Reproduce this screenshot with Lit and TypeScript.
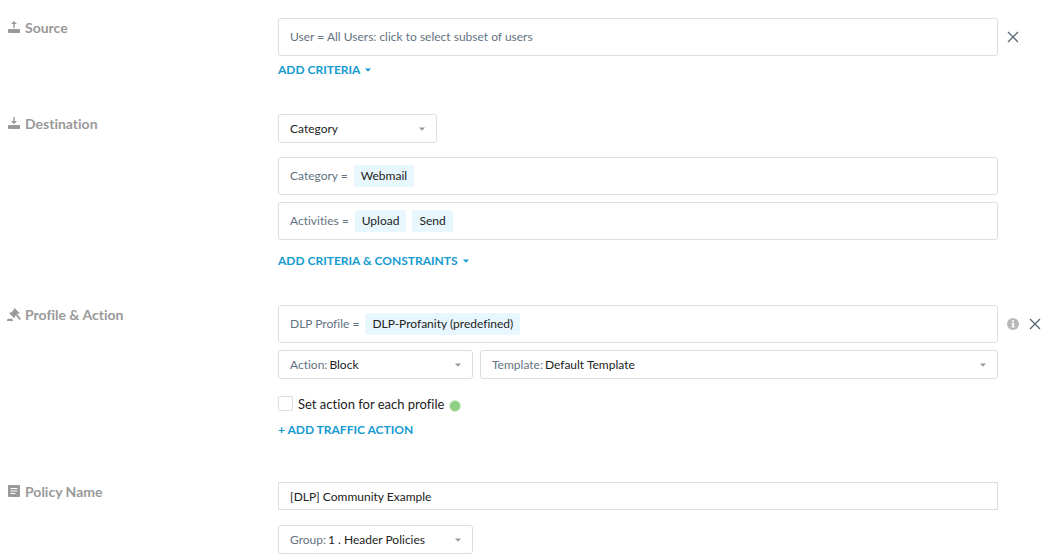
import { LitElement, html, css, svg, nothing } from "lit";
import { customElement, property } from "lit/decorators.js";

const caret = html`<svg class="caret" width="6" height="4" viewBox="0 0 6 4" aria-hidden="true"><path d="M0 0.4h6L3 3.8z" fill="currentColor"/></svg>`;

const close = html`<svg width="12" height="12" viewBox="0 0 12 12" aria-hidden="true"><path d="M1 1l10 10M11 1L1 11" stroke="currentColor" stroke-width="1.3" fill="none"/></svg>`;

const icons: Record<string, unknown> = {
  source: svg`<path d="M2 8h10a1 1 0 0 1 1 1v2a1 1 0 0 1-1 1H2a1 1 0 0 1-1-1V9a1 1 0 0 1 1-1z"/><path d="M6.300 7V3H4L7 0l3 3H7.700v4z"/>`,
  destination: svg`<path d="M2 8h10a1 1 0 0 1 1 1v2a1 1 0 0 1-1 1H2a1 1 0 0 1-1-1V9a1 1 0 0 1 1-1z"/><path d="M6.300 0v4H4l3 3.200L10 4H7.700V0z"/>`,
  action: svg`<path d="M7.500 0l5 5-1 1-0.700-0.400-3 3 0.400 0.700-1 1-5-5 1-1 0.700 0.400 3-3L6.500 1z"/><path d="M8.800 7.500L10.200 6.200 14 10.800l-1.300 1.200z"/><path d="M0.800 10.800h4.400L6 13H0v-1z"/>`,
  policy: svg`<path fill-rule="evenodd" d="M2 0h10a1 1 0 0 1 1 1v10a1 1 0 0 1-1 1H2a1 1 0 0 1-1-1V1a1 1 0 0 1 1-1zM3.500 3v1h7V3zM3.500 5.500v1h7v-1zM3.500 8v1h5V8z"/>`,
};

@customElement("policy-section")
export class PolicySection extends LitElement {
  @property() heading = "";
  @property() icon = "";

  static styles = css`
    :host {
      display: grid;
      grid-template-columns: 270px minmax(0, 1fr);
    }
    h2 {
      display: flex;
      gap: 4px;
      margin: 0;
      font-size: 14px;
      line-height: 20px;
      font-weight: 700;
      color: #999;
    }
    svg {
      width: 14px;
      height: 14px;
      margin-top: 3px;
      margin-left: -1px;
      fill: currentColor;
    }
    .body {
      display: flex;
      flex-direction: column;
      align-items: stretch;
    }
  `;

  render() {
    return html`
      <h2><svg viewBox="0 0 14 14" aria-hidden="true">${icons[this.icon]}</svg>${this.heading}</h2>
      <div class="body"><slot></slot></div>
    `;
  }
}

@customElement("app-root")
export class AppRoot extends LitElement {
  static styles = css`
    :host {
      display: block;
      box-sizing: border-box;
      padding: 18px 0 4px 8px;
      background: #fff;
      color: #222;
      font-family: Lato, "Liberation Sans", sans-serif;
      font-size: 12px;
      line-height: 16px;
      font-variant-ligatures: no-common-ligatures;
    }
    * {
      box-sizing: border-box;
    }
    form {
      display: flex;
      flex-direction: column;
      gap: 37px;
    }
    .last {
      margin-top: 8px;
    }
    .row {
      display: grid;
      grid-template-columns: minmax(0, 1fr) 49px;
      align-items: center;
    }
    .row + .row {
      margin-top: 7px;
    }
    .row.spaced {
      margin-top: 14px;
    }
    .last .row.spaced {
      margin-top: 15px;
    }
    .field {
      display: flex;
      align-items: center;
      gap: 6px;
      height: 38px;
      padding: 0 11px;
      border: 1px solid #dedede;
      border-radius: 3px;
      color: #637281;
    }
    button {
      padding: 0;
      border: 0;
      background: none;
      color: inherit;
      font: inherit;
      font-variant-ligatures: inherit;
      cursor: pointer;
    }
    .chip {
      height: 22px;
      padding: 0 7px;
      border-radius: 2px;
      background: #e8f6fd;
      color: #222;
    }
    .tools {
      display: flex;
      align-items: center;
      gap: 10px;
      padding-left: 9px;
      color: #566573;
    }
    .tools button,
    .tools svg {
      display: block;
    }
    .link {
      display: flex;
      align-items: center;
      align-self: flex-start;
      gap: 5px;
      height: 14px;
      margin-top: 7px;
      line-height: 14px;
      font-weight: 700;
      color: #149bd1;
    }
    .link.low {
      margin-top: 14px;
    }
    .pair {
      display: flex;
      gap: 7px;
    }
    .select {
      display: flex;
      align-items: center;
      position: relative;
      height: 29px;
      border: 1px solid #dedede;
      border-radius: 3px;
    }
    .small {
      width: 159px;
    }
    .medium {
      width: 195px;
    }
    .fill {
      flex: 1;
    }
    .select label {
      padding-left: 11px;
      color: #637281;
    }
    select {
      flex: 1;
      min-width: 0;
      height: 27px;
      padding: 0 24px 0 2px;
      border: 0;
      background: none;
      appearance: none;
      color: #222;
      font: inherit;
    }
    .bare select {
      padding-left: 11px;
    }
    .select .caret {
      position: absolute;
      right: 11px;
      color: #999;
      pointer-events: none;
    }
    .check {
      display: flex;
      align-items: center;
      gap: 5px;
      height: 15px;
      margin: 17px 0 5px;
      font-size: 13px;
      line-height: 14px;
    }
    .check input {
      appearance: none;
      width: 15px;
      height: 15px;
      margin: 0;
      border: 1px solid #dedede;
      border-radius: 1px;
      background: #fff;
    }
    .dot {
      width: 12px;
      height: 12px;
      margin-top: 4px;
      border: 1px solid #d5efd0;
      border-radius: 50%;
      background: #8fd083;
    }
    .text {
      width: 100%;
      height: 28px;
      padding: 0 11px;
      border: 1px solid #dedede;
      border-radius: 0;
      background: #fff;
      color: #222;
      font: inherit;
    }
  `;

  private select(id: string, label: string, value: string, size: string) {
    return html`
      <div class="select ${size} ${label ? "" : "bare"}">
        ${label ? html`<label for=${id}>${label}</label>` : nothing}
        <select id=${id} aria-label=${label ? nothing : value}>
          <option>${value}</option>
        </select>
        ${caret}
      </div>
    `;
  }

  private criteria(label: string, values: string[]) {
    return html`
      <div class="field">
        <span>${label}</span>
        ${values.map((v) => html`<button type="button" class="chip">${v}</button>`)}
      </div>
    `;
  }

  render() {
    return html`
      <form>
        <policy-section icon="source" heading="Source">
          <div class="row">
            <button type="button" class="field">User = All Users: click to select subset of users</button>
            <div class="tools"><button type="button" aria-label="Remove source">${close}</button></div>
          </div>
          <button type="button" class="link">ADD CRITERIA ${caret}</button>
        </policy-section>

        <policy-section icon="destination" heading="Destination">
          ${this.select("destination", "", "Category", "small")}
          <div class="row spaced">${this.criteria("Category =", ["Webmail"])}</div>
          <div class="row">${this.criteria("Activities =", ["Upload", "Send"])}</div>
          <button type="button" class="link low">ADD CRITERIA &amp; CONSTRAINTS ${caret}</button>
        </policy-section>

        <policy-section icon="action" heading="Profile &amp; Action">
          <div class="row">
            ${this.criteria("DLP Profile =", ["DLP-Profanity (predefined)"])}
            <div class="tools">
              <button type="button" aria-label="Profile information">
                <svg width="12" height="12" viewBox="0 0 12 12" aria-hidden="true">
                  <circle cx="6" cy="6" r="6" fill="#b8b8b8" />
                  <path d="M5 2.200h2v1.600H5zM4.400 4.800H7v3.600h0.800v1H4.400v-1h0.800V5.800H4.400z" fill="#fff" />
                </svg>
              </button>
              <button type="button" aria-label="Remove profile">${close}</button>
            </div>
          </div>
          <div class="row">
            <div class="pair">
              ${this.select("action", "Action:", "Block", "medium")}
              ${this.select("template", "Template:", "Default Template", "fill")}
            </div>
          </div>
          <div class="check">
            <input type="checkbox" id="each" />
            <label for="each">Set action for each profile</label>
            <span class="dot"></span>
          </div>
          <button type="button" class="link">+ ADD TRAFFIC ACTION</button>
        </policy-section>

        <policy-section class="last" icon="policy" heading="Policy Name">
          <div class="row">
            <input class="text" type="text" aria-label="Policy name" value="[DLP] Community Example" />
          </div>
          <div class="row spaced">${this.select("group", "Group:", "1 . Header Policies", "medium")}</div>
        </policy-section>
      </form>
    `;
  }
}
